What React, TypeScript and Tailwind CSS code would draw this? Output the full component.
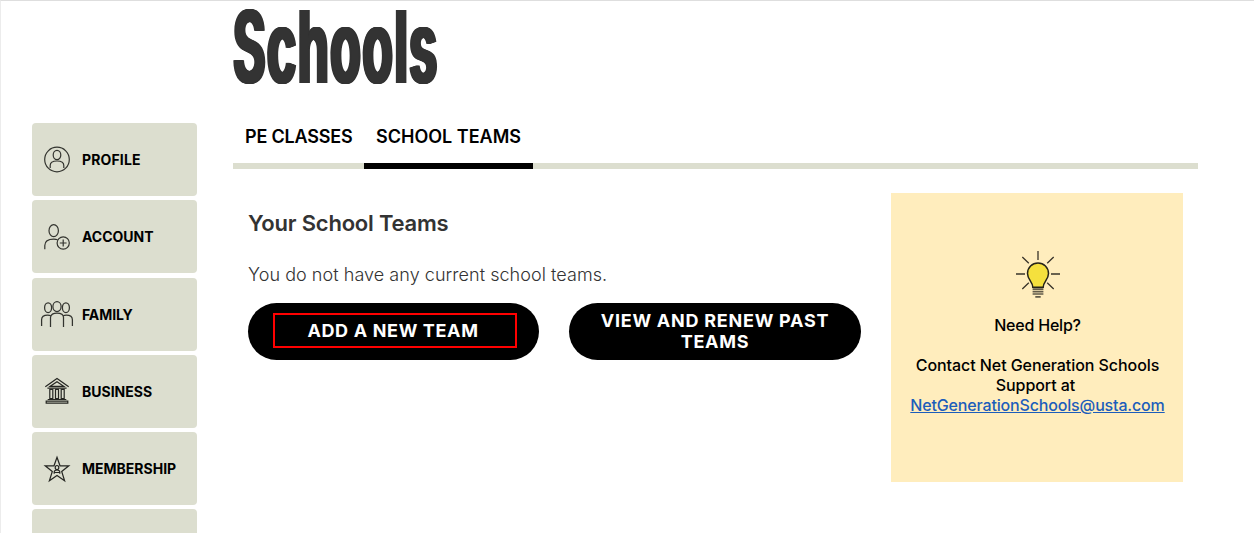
import type { ReactNode } from 'react'

type MenuItem = {
  label: string
  icon: ReactNode
  spacing: string
}

const ProfileIcon = () => (
  <svg width="34" height="28" viewBox="0 0 34 28" fill="none" stroke="#33342f" strokeWidth="1.2">
    <circle cx="17" cy="13.5" r="12.3" />
    <ellipse cx="17" cy="9" rx="3.8" ry="4.7" />
    <path d="M10.2 22v-2.6c0-2.9 3-4.4 6.8-4.4s6.8 1.5 6.8 4.4V22" />
  </svg>
)

const AccountIcon = () => (
  <svg width="34" height="28" viewBox="0 0 34 28" fill="none" stroke="#33342f" strokeWidth="1.2">
    <ellipse cx="13.7" cy="7.7" rx="4.7" ry="6" />
    <path d="M4.8 26.2v-3.7c0-4.4 4-6.4 9-6.4 1.4 0 2.7.2 3.8.6" />
    <circle cx="23.2" cy="20" r="6.1" />
    <path d="M23.2 16.6v6.8M19.8 20h6.8" />
  </svg>
)

const FamilyIcon = () => (
  <svg width="34" height="28" viewBox="0 0 34 28" fill="none" stroke="#33342f" strokeWidth="1.25">
    <ellipse cx="17" cy="6.6" rx="4.1" ry="5" />
    <ellipse cx="8.1" cy="7.7" rx="3.5" ry="4.9" />
    <ellipse cx="25.9" cy="7.7" rx="3.5" ry="4.9" />
    <path d="M10.5 27v-9.4c0-3.3 3-4.4 6.5-4.4s6.5 1.1 6.5 4.4V27" />
    <path d="M1.6 26v-6.2c0-3.3 2.5-4.7 6.1-4.7 1.2 0 2.2.2 3.1.7M32.4 26v-6.2c0-3.3-2.5-4.7-6.1-4.7-1.2 0-2.2.2-3.1.7" />
  </svg>
)

const BusinessIcon = () => (
  <svg width="34" height="28" viewBox="0 0 34 28" fill="none" stroke="#252622" strokeWidth="1.2">
    <path d="M5.3 9.8 17 1.6l11.7 8.2M7.4 11.1h19.2M10.2 9.3 17 4.7l6.8 4.6z" />
    <path d="M9.8 12.3h3v9.2h-3zM15.5 12.3h3v9.2h-3zM21.2 12.3h3v9.2h-3z" />
    <path d="M7.7 22.5h18.6M6.2 24.2h21.6v2H6.2z" />
  </svg>
)

const MembershipIcon = () => (
  <svg width="34" height="28" viewBox="0 0 34 28" fill="none" stroke="#252622" strokeWidth="1.2">
    <path d="m17 2.2 3 8.6h8.8l-7.1 5.7 2.9 9.3-7.6-5.4-7.6 5.4 2.9-9.3-7.1-5.7H14z" />
    <ellipse cx="17" cy="12.6" rx="1.8" ry="2.1" />
    <path d="M14.2 18.8v-1.7c0-1.4 1.2-2.1 2.8-2.1s2.8.7 2.8 2.1v1.7M14.2 17.5h5.6" />
  </svg>
)

const BulbIcon = () => (
  <svg width="46" height="50" viewBox="0 0 46 50" fill="none" stroke="#39342a" strokeWidth="1.3">
    <path d="M23 1v9M1 24h9M36 24h9M7.3 7l6.5 6.3M38.7 7l-6.5 6.3M7.3 39l6.5-6.3M38.7 39l-6.5-6.3" />
    <path
      d="M17.8 37.2c0-5.2-5.3-7.6-5.3-13.7a10.5 10.5 0 0 1 21 0c0 6.1-5.3 8.5-5.3 13.7z"
      fill="#f5e03d"
      stroke="#252319"
      strokeWidth="1.5"
    />
    <path d="M17.6 39.2h10.8M17.6 41.6h10.8M17.6 44h10.8M20.3 46.8h5.4" strokeWidth="1.7" stroke="#625b49" />
  </svg>
)

const menuItems: MenuItem[] = [
  { label: 'PROFILE', icon: <ProfileIcon />, spacing: 'tracking-[0.15px]' },
  { label: 'ACCOUNT', icon: <AccountIcon />, spacing: 'tracking-[0px]' },
  { label: 'FAMILY', icon: <FamilyIcon />, spacing: 'tracking-[-0.1px]' },
  { label: 'BUSINESS', icon: <BusinessIcon />, spacing: 'tracking-[0px]' },
  { label: 'MEMBERSHIP', icon: <MembershipIcon />, spacing: 'tracking-[0px]' },
]

export default function App() {
  return (
    <div className="flex h-[533px] w-[1254px] overflow-hidden border-t border-l border-t-[#dedede] border-l-[#ececec] bg-white font-['Inter',sans-serif] text-black">
      {/* Sidebar */}
      <nav className="ml-[31px] flex w-[165px] shrink-0 flex-col gap-[4.2px] pt-[122.3px]">
        {menuItems.map((item) => (
          <a key={item.label} className="flex h-[73px] shrink-0 items-center rounded-[4px] bg-[#dcdecf] pl-2">
            {item.icon}
            <span className={`ml-2 pt-px text-[14px] leading-5 font-bold ${item.spacing}`}>{item.label}</span>
          </a>
        ))}
        <div className="h-[73px] shrink-0 rounded-[4px] bg-[#dcdecf]" />
      </nav>

      <main className="ml-9 w-[965px] shrink-0">
        {/* Heading */}
        <h1 className="h-[111px] w-[420px] origin-left scale-x-[0.493] text-[101px] leading-[90px] font-bold tracking-[3px] whitespace-nowrap text-[#333] [text-shadow:1px_0_#333,-1px_0_#333,2px_0_#333,-2px_0_#333,3.5px_0_#333,-3.5px_0_#333]">
          Schools
        </h1>

        {/* Tabs */}
        <div className="flex h-[57px] border-b-[6px] border-[#dcdecf] text-[18px] leading-6 font-semibold whitespace-nowrap">
          <div className="h-[57px] w-[131px] pt-[13px] pl-3 tracking-[-0.2px]">PE CLASSES</div>
          <div className="h-[57px] w-[169px] border-b-[6px] border-black pt-[13px] pl-3 tracking-[0px]">
            SCHOOL TEAMS
          </div>
        </div>

        <div className="flex pt-6 pl-[15px]">
          <section className="w-[613px]">
            <h2 className="pt-4 text-[22px] leading-7 font-semibold tracking-[-0.2px] text-[#333]">Your School Teams</h2>
            <p className="mt-6 text-[18px] leading-7 font-light tracking-[0.05px] text-[#333]">
              You do not have any current school teams.
            </p>
            <div className="mt-[14px] flex gap-[30px] text-[18px] leading-[21px] font-bold text-white">
              <button className="flex h-[57px] w-[291px] items-center justify-center rounded-full bg-black">
                <span className="mb-0.5 ml-[3px] flex h-[35px] w-[244px] items-center justify-center border-2 border-[#ff0000] pr-1 tracking-[0.65px]">
                  ADD A NEW TEAM
                </span>
              </button>
              <button className="h-[57px] w-[292px] rounded-full bg-black px-6 pb-0.5 tracking-[0.75px]">
                VIEW AND RENEW PAST TEAMS
              </button>
            </div>
          </section>

          {/* Help card */}
          <aside className="ml-[30px] flex h-[289px] w-[292px] flex-col items-center bg-[#ffedbd] pt-[57px] pl-px text-center text-[16px] leading-5 font-medium">
            <BulbIcon />
            <p className="mt-[15px] tracking-[-0.2px]">Need Help?</p>
            <p className="mt-5 tracking-[-0.07px] whitespace-nowrap">
              Contact Net Generation Schools
              <br />
              <span className="mr-1">Support at</span>
              <br />
              <a className="tracking-[-0.16px] text-[#1c5dbb] underline">NetGenerationSchools@usta.com</a>
            </p>
          </aside>
        </div>
      </main>
    </div>
  )
}
